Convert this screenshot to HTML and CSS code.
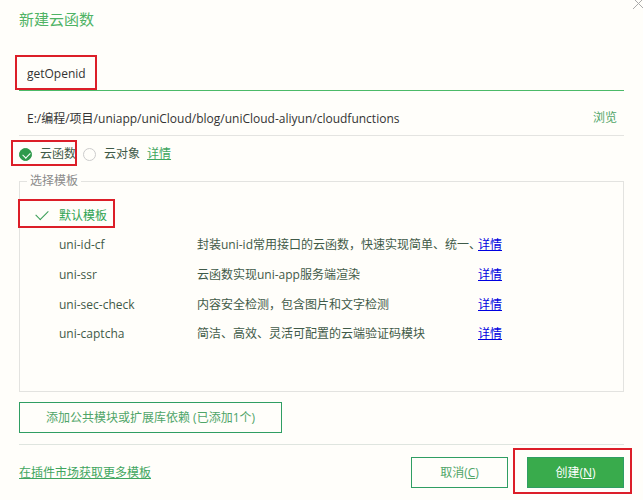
FILE: index.html
```html
<!DOCTYPE html>
<html lang="zh-CN">
<head>
  <meta charset="UTF-8" />
  <meta name="viewport" content="width=device-width, initial-scale=1.0" />
  <title>新建云函数</title>
  <link rel="stylesheet" href="styles.css">
</head>

<body>
  <form class="dialog">
    <button type="button" class="close" aria-label="关闭">
      <svg width="13" height="13" viewBox="0 0 13 13"><path d="M1 1L12 12M12 1L1 12" /></svg>
    </button>

    <h1>新建云函数</h1>

    <div class="name-row">
      <input type="text" class="name" value="getOpenid" aria-label="云函数名称" />
      <span class="mark mark-name"></span>
    </div>

    <div class="path-row">
      <input type="text" class="path" value="E:/编程/项目/uniapp/uniCloud/blog/uniCloud-aliyun/cloudfunctions" aria-label="路径" />
      <button type="button" class="browse">浏览</button>
    </div>

    <div class="type-row">
      <input type="radio" class="type" name="type" id="type-fn" checked />
      <label for="type-fn">云函数</label>
      <input type="radio" class="type" name="type" id="type-obj" />
      <label for="type-obj">云对象</label>
      <a class="green-link" href="#">详情</a>
      <span class="mark mark-type"></span>
    </div>

    <fieldset>
      <legend>选择模板</legend>
      <table>
        <tr>
          <td class="pick"><input type="radio" class="tpl" name="tpl" id="tpl-default" checked /></td>
          <td class="tpl-name"><label for="tpl-default">默认模板</label></td>
          <td class="desc"></td>
          <td></td>
        </tr>
        <tr>
          <td class="pick"><input type="radio" class="tpl" name="tpl" id="tpl-id" /></td>
          <td class="tpl-name"><label for="tpl-id">uni-id-cf</label></td>
          <td class="desc">封装uni-id常用接口的云函数，快速实现简单、统一、</td>
          <td><a href="#">详情</a></td>
        </tr>
        <tr>
          <td class="pick"><input type="radio" class="tpl" name="tpl" id="tpl-ssr" /></td>
          <td class="tpl-name"><label for="tpl-ssr">uni-ssr</label></td>
          <td class="desc">云函数实现uni-app服务端渲染</td>
          <td><a href="#">详情</a></td>
        </tr>
        <tr>
          <td class="pick"><input type="radio" class="tpl" name="tpl" id="tpl-sec" /></td>
          <td class="tpl-name"><label for="tpl-sec">uni-sec-check</label></td>
          <td class="desc">内容安全检测，包含图片和文字检测</td>
          <td><a href="#">详情</a></td>
        </tr>
        <tr>
          <td class="pick"><input type="radio" class="tpl" name="tpl" id="tpl-captcha" /></td>
          <td class="tpl-name"><label for="tpl-captcha">uni-captcha</label></td>
          <td class="desc">简洁、高效、灵活可配置的云端验证码模块</td>
          <td><a href="#">详情</a></td>
        </tr>
      </table>
      <span class="mark mark-tpl"></span>
    </fieldset>

    <button type="button" class="btn deps">添加公共模块或扩展库依赖 (已添加1个)</button>

    <footer>
      <a class="green-link" href="#">在插件市场获取更多模板</a>
      <div class="actions">
        <button type="button" class="btn">取消(<u>C</u>)</button>
        <div class="create-box">
          <button type="submit" class="btn primary">创建(<u>N</u>)</button>
          <span class="mark mark-create"></span>
        </div>
      </div>
    </footer>
  </form>
</body>
</html>
```

FILE: styles.css
```css
* {
  box-sizing: border-box;
}

body {
  margin: 0;
  background: #fffefa;
  color: #3f5a48;
  font-family: "Open Sans", "Noto Sans CJK SC", sans-serif;
  font-size: 12px;
  line-height: 18px;
}

input, button {
  font: inherit;
  margin: 0;
  padding: 0;
  border: 0;
  background: none;
  border-radius: 0;
  outline: none;
}

.dialog {
  position: relative;
  padding: 8px 19px 0;
  overflow: hidden;
}

.close {
  position: absolute;
  top: -3px;
  right: -2px;
  line-height: 0;
}

.close path {
  stroke: #aaa;
  fill: none;
}

h1 {
  margin: 0 0 28px;
  font-size: 15px;
  font-weight: normal;
  line-height: 22px;
  color: #4fb365;
}

.name-row {
  position: relative;
  display: flex;
  height: 33px;
  border-bottom: 1px solid #4cba68;
}

.name, .path {
  flex: 1;
  min-width: 0;
  padding-left: 8px;
  color: #333;
}

.name {
  height: 30px;
}

.path-row {
  display: flex;
  height: 45px;
  padding: 10px 7px 0 0;
  border-bottom: 1px solid #e4e4e1;
}

.path-row > * {
  height: 34px;
}

.browse {
  color: #4fa568;
}

/* 类型单选 */
.type-row {
  position: relative;
  display: flex;
  align-items: center;
  height: 36px;
}

.type {
  appearance: none;
  width: 13px;
  height: 13px;
  margin-right: 8px;
  border: 1px solid #ccc;
  border-radius: 50%;
}

.type:checked {
  background: #2f9a4c;
  border-color: #2f9a4c;
}

.type:checked::before {
  content: "";
  display: block;
  width: 6px;
  height: 4px;
  margin: 3px 0 0 3px;
  border-left: 1px solid #fff;
  border-bottom: 1px solid #fff;
  transform: rotate(-45deg);
}

.type-row label {
  margin-right: 7px;
}

.green-link {
  color: #3fa65f;
  text-underline-offset: 1px;
}

/* 模板列表 */
fieldset {
  position: relative;
  height: 220px;
  margin: 0 0 10px;
  padding: 11px 0 0;
  border: 1px solid #e3e3e0;
}

legend {
  height: 18px;
  margin-left: 7px;
  padding: 0 3px;
  color: #8b8b8b;
}

table {
  height: 148px;
  border-collapse: collapse;
}

td {
  padding: 0;
  white-space: nowrap;
}

.pick {
  width: 39px;
  padding-left: 16px;
}

.tpl {
  display: block;
  appearance: none;
  width: 12px;
  height: 12px;
}

.tpl:checked::before {
  content: "";
  display: block;
  width: 11px;
  height: 6px;
  border-left: 1px solid #3a9d56;
  border-bottom: 1px solid #3a9d56;
  transform: rotate(-45deg);
}

.tpl-name {
  width: 138px;
}

.desc {
  width: 281px;
  max-width: 281px;
  overflow: hidden;
}

td a {
  color: #0000e0;
  text-underline-offset: 1px;
}

tr:has(:checked) label {
  color: #2fa352;
}

.btn {
  min-width: 97px;
  height: 31px;
  border: 1px solid #2f9e63;
  color: #4fa568;
}

.deps {
  display: block;
  padding: 0 26px;
}

.primary {
  background: #39ab4c;
  color: #fff;
}

footer {
  display: flex;
  justify-content: space-between;
  align-items: center;
  margin-top: 11px;
  padding: 12px 0;
  border-top: 1px solid #dfe5df;
}

.actions {
  display: flex;
  gap: 19px;
}

.create-box {
  position: relative;
}

/* 红色标注框 */
.mark {
  position: absolute;
  border: 2px solid #dc1e28;
  pointer-events: none;
}

.mark-name {
  top: -3px;
  left: -4px;
  width: 82px;
  height: 35px;
}

.mark-type {
  top: 4px;
  left: -8px;
  width: 66px;
  height: 26px;
}

.mark-tpl {
  top: 9px;
  left: -2px;
  width: 97px;
  height: 29px;
}

.mark-create {
  top: -9px;
  left: -14px;
  right: -8px;
  bottom: -6px;
}
```
